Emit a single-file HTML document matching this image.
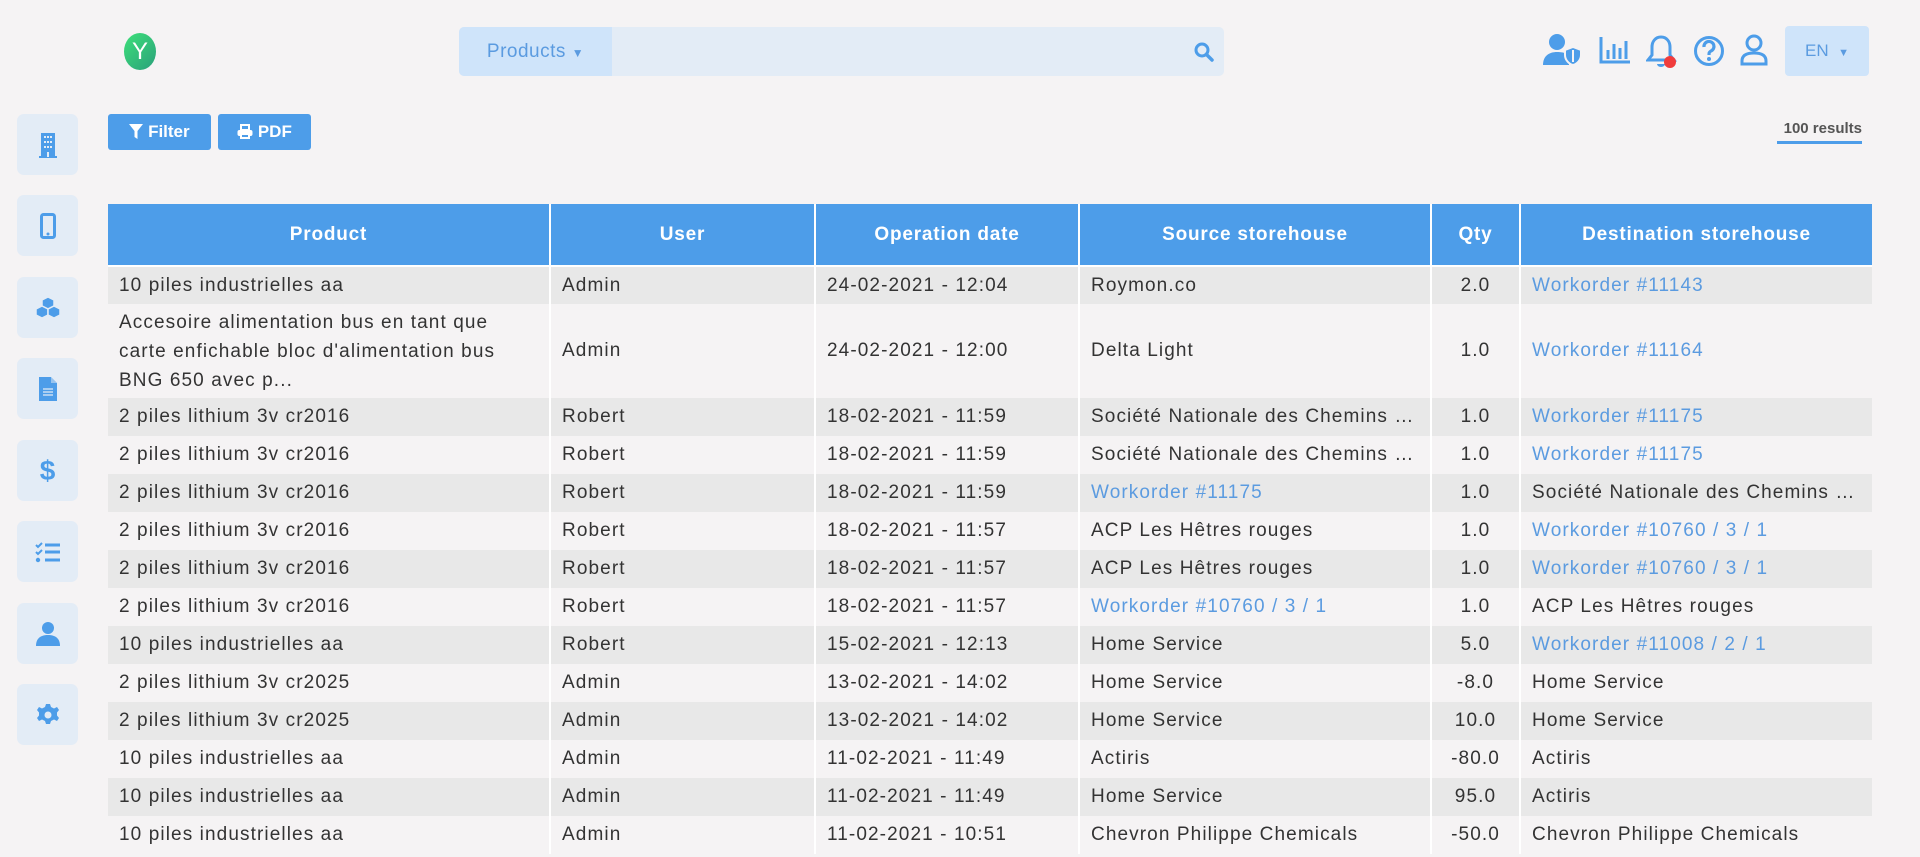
<!DOCTYPE html>
<html><head><meta charset="utf-8"><style>
*{box-sizing:border-box;margin:0;padding:0}
body{width:1920px;height:857px;overflow:hidden;background:#f5f3f4;font-family:"Liberation Sans",sans-serif;color:#333;position:relative}
.abs{position:absolute}
.logo{left:124px;top:33px;width:32px;height:37px;border-radius:50%;background:linear-gradient(135deg,#3ee07a,#2aa07a);color:#fff;font-size:24px;text-align:center;line-height:37px}
.search{left:459px;top:27px;width:765px;height:49px;background:#e3ecf6;border-radius:5px;overflow:hidden}
.prod{position:absolute;left:0;top:0;width:153px;height:49px;background:#cfe4fa;color:#5b9be0;font-size:19px;line-height:49px;text-align:center;letter-spacing:.5px}
.side{left:17px;width:61px;height:61px;background:#e3ecf6;border-radius:7px;display:flex;align-items:center;justify-content:center}
.btn{top:114px;height:36px;background:#4d9de9;border-radius:3px;color:#fff;font-weight:bold;font-size:17px;line-height:36px;text-align:center}
table{position:absolute;left:108px;top:204px;width:1764px;border-collapse:collapse;table-layout:fixed;font-size:19px;letter-spacing:1.1px}
th{background:#4d9de9;color:#fff;height:62px;font-size:19px;letter-spacing:.8px;border-right:2px solid #fff;border-bottom:2px solid #fff}
th:last-child{border-right:none}
td{height:38px;padding:0 11px;border-right:2px solid #fff;white-space:nowrap;overflow:hidden;text-overflow:ellipsis}
td:last-child{border-right:none}
tr.g td{background:#e8e8e8}
td.q{text-align:center}
a{color:#5b9be0;text-decoration:none}
td.m{white-space:normal;line-height:29px;height:94px}
</style></head><body>
<div class="abs logo">Y</div>
<div class="abs search"><div class="prod">Products <span style="font-size:12px">▼</span></div>
<svg style="position:absolute;right:10px;top:15px" width="20" height="20" viewBox="0 0 20 20"><circle cx="8" cy="8" r="6" stroke="#4d9de9" stroke-width="3" fill="none"/><path d="M12.5 12.5L18 18" stroke="#4d9de9" stroke-width="3.5" stroke-linecap="round"/></svg></div>
<svg class="abs" style="left:1543px;top:33px" width="40" height="34" viewBox="0 0 40 34"><circle cx="14" cy="9" r="8" fill="#4d9de9"/><path d="M0 32c0-9 6-13 14-13s10 2 12 4v9z" fill="#4d9de9"/><path d="M30 14l8 3v5c0 5-4 9-8 10c-4-1-8-5-8-10v-5z" fill="#4d9de9" stroke="#f5f3f4" stroke-width="2"/><path d="M30 17v12" stroke="#f5f3f4" stroke-width="2"/></svg>
<svg class="abs" style="left:1599px;top:36px" width="32" height="28" viewBox="0 0 32 28"><path d="M2 1v25h29" stroke="#4d9de9" stroke-width="3" fill="none"/><path d="M9 14v9M15 8v15M21 12v11M27 5v18" stroke="#4d9de9" stroke-width="3"/></svg>
<svg class="abs" style="left:1646px;top:34px" width="34" height="36" viewBox="0 0 34 36"><path d="M15 3c-6 0-9 5-9 10v8l-4 5h26l-4-5v-8c0-5-3-10-9-10z" stroke="#4d9de9" stroke-width="3" fill="none"/><path d="M11 30a4 3 0 0 0 8 0z" fill="#4d9de9"/><circle cx="24" cy="28" r="6" fill="#f03c3c"/></svg>
<svg class="abs" style="left:1693px;top:35px" width="32" height="32" viewBox="0 0 32 32"><circle cx="16" cy="16" r="13.5" stroke="#4d9de9" stroke-width="3" fill="none"/><path d="M11 12a5 5 0 1 1 7 4c-2 1-2 2-2 4" stroke="#4d9de9" stroke-width="3.2" fill="none"/><circle cx="16" cy="24" r="2" fill="#4d9de9"/></svg>
<svg class="abs" style="left:1740px;top:34px" width="28" height="32" viewBox="0 0 28 32"><circle cx="14" cy="9" r="7" stroke="#4d9de9" stroke-width="3" fill="none"/><path d="M2 30v-3c0-6 5-8 12-8s12 2 12 8v3z" stroke="#4d9de9" stroke-width="3" fill="none"/></svg>
<div class="abs" style="left:1785px;top:26px;width:84px;height:50px;background:#cfe4fa;border-radius:4px;color:#5b9be0;font-size:17px;line-height:50px;text-align:center">EN &nbsp;<span style="font-size:11px">▼</span></div>

<div class="abs side" style="top:114px"><svg width="20" height="26" viewBox="0 0 20 26"><path d="M3 1h14v23h2v2H1v-2h2z" fill="#4d9de9"/><g fill="#e3ecf6"><rect x="6" y="4" width="2" height="2"/><rect x="9" y="4" width="2" height="2"/><rect x="12" y="4" width="2" height="2"/><rect x="6" y="9" width="2" height="2"/><rect x="9" y="9" width="2" height="2"/><rect x="12" y="9" width="2" height="2"/><rect x="6" y="14" width="2" height="2"/><rect x="9" y="14" width="2" height="2"/><rect x="12" y="14" width="2" height="2"/><rect x="9" y="20" width="2" height="5"/></g></svg></div>
<div class="abs side" style="top:195px"><svg width="16" height="26" viewBox="0 0 16 26"><rect x="1.5" y="1.5" width="13" height="23" rx="2" stroke="#4d9de9" stroke-width="3" fill="none"/><circle cx="8" cy="21" r="1.5" fill="#4d9de9"/></svg></div>
<div class="abs side" style="top:277px"><svg width="26" height="24" viewBox="0 0 26 24"><g fill="#4d9de9" stroke="#e3ecf6" stroke-width="1.5"><path d="M13 1l6 3v6l-6 3-6-3V4z"/><path d="M7 10l6 3v6l-6 3-6-3v-6z"/><path d="M19 10l6 3v6l-6 3-6-3v-6z"/></g></svg></div>
<div class="abs side" style="top:358px"><svg width="20" height="26" viewBox="0 0 20 26"><path d="M1 1h12l6 6v18H1z" fill="#4d9de9"/><path d="M13 1v6h6" fill="#e3ecf6" opacity=".5"/><path d="M5 13h10M5 16h10M5 19h10" stroke="#e3ecf6" stroke-width="1.3"/></svg></div>
<div class="abs side" style="top:440px"><span style="color:#4d9de9;font-weight:bold;font-size:28px">$</span></div>
<div class="abs side" style="top:521px"><svg width="26" height="22" viewBox="0 0 26 22"><path d="M1 4l2 2 4-4M1 11l2 2 4-4" stroke="#4d9de9" stroke-width="2" fill="none"/><circle cx="3" cy="19" r="2.2" fill="#4d9de9"/><path d="M10 4h15M10 11h15M10 19h15" stroke="#4d9de9" stroke-width="3"/></svg></div>
<div class="abs side" style="top:603px"><svg width="24" height="26" viewBox="0 0 24 26"><circle cx="12" cy="7" r="6" fill="#4d9de9"/><path d="M0 25c0-8 5-11 12-11s12 3 12 11z" fill="#4d9de9"/></svg></div>
<div class="abs side" style="top:684px"><svg width="24" height="24" viewBox="0 0 24 24"><path fill="#4d9de9" d="M10 1h4l1 3 3 1.5 3-1.5 2 3-2 2.5v3l2 2.5-2 3-3-1.5-3 1.5-1 3h-4l-1-3-3-1.5-3 1.5-2-3 2-2.5v-3L1 7l2-3 3 1.5L9 4z"/><circle cx="12" cy="12" r="3.5" fill="#e3ecf6"/></svg></div>

<div class="abs btn" style="left:108px;width:103px"><svg width="14" height="15" viewBox="0 0 14 15" style="vertical-align:-2px"><path d="M0 0h14L8.5 7v8l-3-2V7z" fill="#fff"/></svg> Filter</div>
<div class="abs btn" style="left:218px;width:93px"><svg width="16" height="15" viewBox="0 0 16 15" style="vertical-align:-2px"><rect x="4" y="1" width="8" height="5" stroke="#fff" stroke-width="2" fill="none"/><rect x="0.5" y="6" width="15" height="6" rx="2" fill="#fff"/><rect x="4" y="10" width="8" height="4" stroke="#fff" stroke-width="2" fill="#4d9de9"/></svg> PDF</div>
<div class="abs" style="left:1777px;top:120px;width:85px;font-weight:bold;font-size:15px;color:#555;text-align:right;border-bottom:3px solid #4d9de9;padding-bottom:4px">100 results</div>

<table>
<colgroup><col style="width:442px"><col style="width:265px"><col style="width:264px"><col style="width:352px"><col style="width:89px"><col style="width:352px"></colgroup>
<tr><th>Product</th><th>User</th><th>Operation date</th><th>Source storehouse</th><th>Qty</th><th>Destination storehouse</th></tr>
<tr class="g"><td>10 piles industrielles aa</td><td>Admin</td><td>24-02-2021 - 12:04</td><td>Roymon.co</td><td class="q">2.0</td><td><a>Workorder #11143</a></td></tr>
<tr><td class="m">Accesoire alimentation bus en tant que carte enfichable bloc d'alimentation bus BNG 650 avec p...</td><td>Admin</td><td>24-02-2021 - 12:00</td><td>Delta Light</td><td class="q">1.0</td><td><a>Workorder #11164</a></td></tr>
<tr class="g"><td>2 piles lithium 3v cr2016</td><td>Robert</td><td>18-02-2021 - 11:59</td><td>Société Nationale des Chemins de fer</td><td class="q">1.0</td><td><a>Workorder #11175</a></td></tr>
<tr><td>2 piles lithium 3v cr2016</td><td>Robert</td><td>18-02-2021 - 11:59</td><td>Société Nationale des Chemins de fer</td><td class="q">1.0</td><td><a>Workorder #11175</a></td></tr>
<tr class="g"><td>2 piles lithium 3v cr2016</td><td>Robert</td><td>18-02-2021 - 11:59</td><td><a>Workorder #11175</a></td><td class="q">1.0</td><td>Société Nationale des Chemins de fer</td></tr>
<tr><td>2 piles lithium 3v cr2016</td><td>Robert</td><td>18-02-2021 - 11:57</td><td>ACP Les Hêtres rouges</td><td class="q">1.0</td><td><a>Workorder #10760 / 3 / 1</a></td></tr>
<tr class="g"><td>2 piles lithium 3v cr2016</td><td>Robert</td><td>18-02-2021 - 11:57</td><td>ACP Les Hêtres rouges</td><td class="q">1.0</td><td><a>Workorder #10760 / 3 / 1</a></td></tr>
<tr><td>2 piles lithium 3v cr2016</td><td>Robert</td><td>18-02-2021 - 11:57</td><td><a>Workorder #10760 / 3 / 1</a></td><td class="q">1.0</td><td>ACP Les Hêtres rouges</td></tr>
<tr class="g"><td>10 piles industrielles aa</td><td>Robert</td><td>15-02-2021 - 12:13</td><td>Home Service</td><td class="q">5.0</td><td><a>Workorder #11008 / 2 / 1</a></td></tr>
<tr><td>2 piles lithium 3v cr2025</td><td>Admin</td><td>13-02-2021 - 14:02</td><td>Home Service</td><td class="q">-8.0</td><td>Home Service</td></tr>
<tr class="g"><td>2 piles lithium 3v cr2025</td><td>Admin</td><td>13-02-2021 - 14:02</td><td>Home Service</td><td class="q">10.0</td><td>Home Service</td></tr>
<tr><td>10 piles industrielles aa</td><td>Admin</td><td>11-02-2021 - 11:49</td><td>Actiris</td><td class="q">-80.0</td><td>Actiris</td></tr>
<tr class="g"><td>10 piles industrielles aa</td><td>Admin</td><td>11-02-2021 - 11:49</td><td>Home Service</td><td class="q">95.0</td><td>Actiris</td></tr>
<tr><td>10 piles industrielles aa</td><td>Admin</td><td>11-02-2021 - 10:51</td><td>Chevron Philippe Chemicals</td><td class="q">-50.0</td><td>Chevron Philippe Chemicals</td></tr>
</table>
</body></html>
